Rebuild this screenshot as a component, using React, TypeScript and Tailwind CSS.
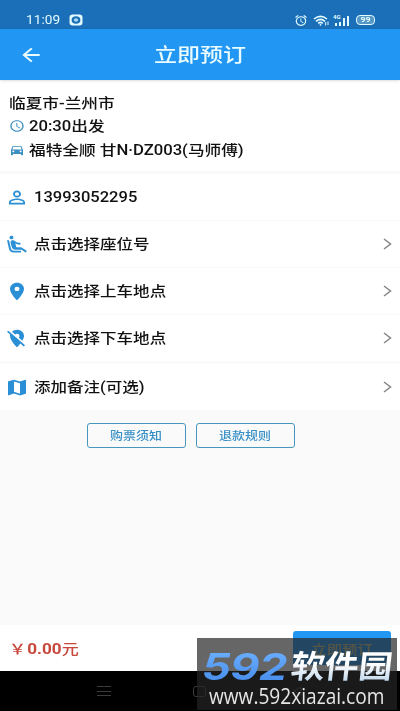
import React from 'react';
import {
  MdAccessTime,
  MdDirectionsCar,
  MdPersonOutline,
  MdAirlineSeatReclineExtra,
  MdLocationOn,
  MdLocationOff,
  MdMap,
  MdAlarm,
  MdArrowBack,
} from 'react-icons/md';
import type { IconType } from 'react-icons';

interface RowProps {
  icon: IconType;
  label: string;
  className: string;
  arrow?: boolean;
}

function Row({ icon: Icon, label, className, arrow = true }: RowProps) {
  return (
    <div className={`flex items-center bg-white pl-[5px] pr-2 ${className}`}>
      <Icon preserveAspectRatio="none" className="w-6 h-[21px] shrink-0 text-[#2b8fd6]" />
      <span className="ml-[5px] origin-left scale-x-[1.18] whitespace-nowrap">{label}</span>
      {arrow && (
        <svg viewBox="0 0 9 12" className="ml-auto w-[9px] h-3" fill="none" stroke="#858585" strokeWidth="1.5">
          <path d="M1 1l6.5 5L1 11" />
        </svg>
      )}
    </div>
  );
}

function StatusBar() {
  return (
    <div className="flex h-[29px] items-center bg-[#1a6fb8] pl-[26px] pr-[25px] pt-[11px] text-[#e2fbff]">
      <span className="w-[43px] origin-left scale-x-[1.14] font-[Roboto] text-[12px] font-normal leading-none">11:09</span>
      <svg viewBox="0 0 14 12" className="w-[14px] h-3">
        <rect x="0.5" y="0.5" width="13" height="11" rx="3" fill="#e2fbff" />
        <ellipse cx="7" cy="6" rx="4.4" ry="3.8" fill="#1a6fb8" />
        <ellipse cx="7" cy="6" rx="2.2" ry="1.8" fill="#a9d8ee" />
      </svg>
      <div className="ml-auto flex items-center">
        <MdAlarm preserveAspectRatio="none" className="w-[14px] h-[13px]" />
        <svg viewBox="0 0 16 11" className="ml-[5px] w-4 h-[11px]" fill="none" stroke="currentColor" strokeWidth="1.6">
          <path d="M1 4Q7.5-1.3 14 4M3 6.3Q7.5 2.5 12 6.3M5.2 8.3Q7.5 6.5 9.8 8.3" />
          <circle cx="7.5" cy="9.8" r="0.9" fill="currentColor" stroke="none" />
          <path d="M12.7 7v3.5M15 6.5v3.5" strokeWidth="1" />
        </svg>
        <div className="ml-[4px] flex h-[11px] w-[17px] items-end gap-[2px] relative">
          <span className="absolute -top-px left-0 font-[Roboto] text-[6px] font-bold leading-none">4G</span>
          <i className="ml-[2px] h-[3px] w-[2px] bg-current" />
          <i className="h-1 w-[2px] bg-current" />
          <i className="h-[8px] w-[2px] bg-current" />
          <i className="h-[10px] w-[2px] bg-current" />
        </div>
        <div className="ml-[6px] flex h-[10px] w-[19px] items-center justify-center rounded-[4px] border border-current bg-[#5797c5] font-[Roboto] text-[8px] font-bold leading-none">
          <span className="scale-x-[1.1]">99</span>
        </div>
      </div>
    </div>
  );
}

function Watermark() {
  return (
    <div className="absolute left-[197px] top-[638px] h-[72px] w-[200px] overflow-hidden bg-[#252525]/70">
      <div className="flex h-[46px] items-start whitespace-nowrap pt-[11px] leading-none">
        <span className="ml-[5px] w-[87px] origin-left scale-x-[1.22] bg-linear-to-b from-[#6cb0ff] to-[#458bea] bg-clip-text font-[Inter] text-[37px] font-bold italic leading-[36px] tracking-[-0.5px] text-transparent">
          592
        </span>
        <span className="mt-px w-[106px] origin-bottom-left -skew-x-6 scale-x-[1.06] bg-linear-to-b from-white from-40% to-[#b9d3ea] bg-clip-text text-[32px] font-bold leading-[34px] text-transparent">
          软件园
        </span>
      </div>
      <div className="ml-[12px] origin-left scale-x-[.91] font-['Open_Sans'] text-[21px] leading-[24px] text-[#e6e6e6] whitespace-nowrap">
        www.592xiazai.com
      </div>
    </div>
  );
}

export default function App() {
  return (
    <div className="relative flex h-[711px] w-[400px] flex-col overflow-hidden bg-[#fafafa] font-[Roboto,'Noto_Sans_CJK_SC',sans-serif] text-[14px] font-medium leading-none text-[#111]">
      <StatusBar />
      <header className="relative flex h-[51px] items-center bg-[#2196f3] text-[#e9fcff] shadow-sm">
        <MdArrowBack preserveAspectRatio="none" className="ml-[18px] h-[22px] w-[26px]" />
        <div className="ml-[110px] mt-[2px] origin-left scale-x-[1.21] text-[19px]">立即预订</div>
      </header>

      <section className="flex h-[91px] flex-col bg-white pl-[9px] pt-[11px]">
        <div className="flex h-6 items-center">
          <span className="origin-left scale-x-[1.19]">临夏市-兰州市</span>
        </div>
        <div className="flex h-[22px] items-center">
          <MdAccessTime preserveAspectRatio="none" className="w-[16px] h-[14px] text-[#3d8fc0]" />
          <span className="ml-1 origin-left scale-x-[1.19]">20:30出发</span>
        </div>
        <div className="flex h-[25px] items-center">
          <MdDirectionsCar preserveAspectRatio="none" className="w-[16px] h-[14px] text-[#3d8fc0]" />
          <span className="ml-1 origin-left scale-x-[1.19] whitespace-nowrap">福特全顺 甘N·DZ003(马师傅)</span>
        </div>
      </section>

      <Row icon={MdPersonOutline} label="13993052295" arrow={false} className="mt-[3px] h-[46px]" />
      <Row icon={MdAirlineSeatReclineExtra} label="点击选择座位号" className="mt-px h-[46px]" />
      <Row icon={MdLocationOn} label="点击选择上车地点" className="mt-px h-[46px]" />
      <Row icon={MdLocationOff} label="点击选择下车地点" className="mt-px h-[46px]" />
      <Row icon={MdMap} label="添加备注(可选)" className="mt-[3px] h-[46px]" />

      <div className="mt-[13px] flex justify-center gap-[10px] pr-[18px] text-[11px] text-[#368fc6]">
        <button className="h-[25px] w-[99px] rounded-[3px] border border-[#4797bd] pr-px pt-[2px]">
          <span className="inline-block scale-x-[1.18]">购票须知</span>
        </button>
        <button className="h-[25px] w-[99px] rounded-[3px] border border-[#4797bd] pr-px pt-[2px]">
          <span className="inline-block scale-x-[1.18]">退款规则</span>
        </button>
      </div>

      <footer className="mt-auto flex h-[46px] items-center bg-white pl-[9px] pr-[9px]">
        <span className="mt-px flex origin-left scale-x-[1.22] whitespace-nowrap font-bold text-[#c8473b]">
          <span className="font-medium">￥</span>
          <span className="ml-px">0.00</span>
          <span className="font-medium">元</span>
        </span>
        <button className="ml-auto h-[34px] w-[98px] rounded-[3px] bg-[#2196f3] pt-[2px] text-[13px] text-[#c2c68e]">
          <span className="inline-block scale-x-[1.18]">立即预订</span>
        </button>
      </footer>
      <nav className="flex h-10 items-center bg-black text-[#3c3c3c]">
        <svg viewBox="0 0 14 12" className="ml-[97px] w-[14px] h-3" stroke="currentColor">
          <path d="M0 1.5h14M0 6.5h14M0 10.5h14" />
        </svg>
        <span className="ml-[82px] h-[11px] w-[13px] rounded-[3px] border border-current" />
        <svg viewBox="0 0 9 10" className="ml-[87px] h-[10px] w-[9px]" fill="none" stroke="currentColor">
          <path d="M8 1L1 5l7 4z" />
        </svg>
      </nav>
      <Watermark />
    </div>
  );
}
